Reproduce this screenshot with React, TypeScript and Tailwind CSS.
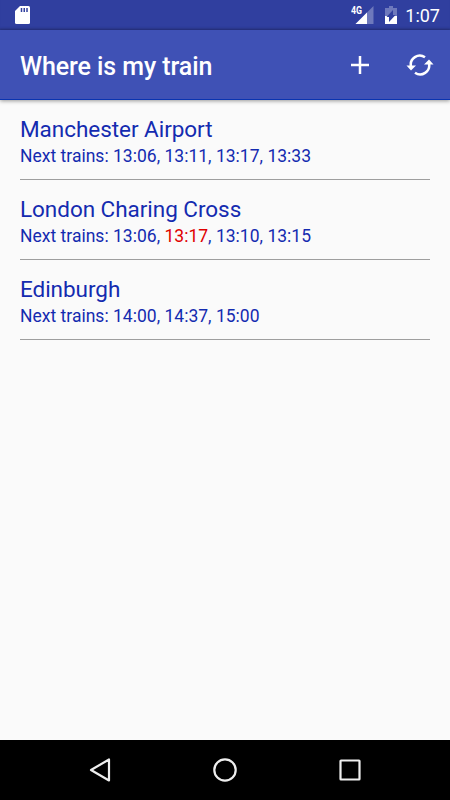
type Train = { time: string; late?: boolean };

const stations: { name: string; trains: Train[] }[] = [
  {
    name: "Manchester Airport",
    trains: [{ time: "13:06" }, { time: "13:11" }, { time: "13:17" }, { time: "13:33" }],
  },
  {
    name: "London Charing Cross",
    trains: [{ time: "13:06" }, { time: "13:17", late: true }, { time: "13:10" }, { time: "13:15" }],
  },
  {
    name: "Edinburgh",
    trains: [{ time: "14:00" }, { time: "14:37" }, { time: "15:00" }],
  },
];

function StatusBar() {
  return (
    <div className="flex h-[30px] items-center bg-[#303f9f] text-white shadow-[inset_0_-3px_3px_-2px_rgba(0,0,0,0.2)]">
      {/* SD card */}
      <svg className="ml-[14px]" width="17" height="20" viewBox="0 0 17 20">
        <path d="M6 1h8.500q1.500 0 1.500 1.500v15q0 1.500-1.500 1.500h-12q-1.500 0-1.500-1.500V6z" fill="#fff" />
        <path d="M7.500 3v4M10.250 3v4M13 3v4" stroke="#303f9f" strokeWidth="1.500" />
      </svg>

      {/* Signal */}
      <div className="relative ml-auto mr-[11px] h-5 w-[23px]">
        <svg className="absolute right-0 top-0" width="19" height="20" viewBox="0 0 19 20">
          <path d="M18.500 1v18h-18z" fill="#fff" fillOpacity=".3" />
          <path d="M12 7.500v11.500H.500z" fill="#fff" />
        </svg>
        <span className="absolute left-0 top-px origin-left scale-x-80 text-[11px] font-bold leading-[10px]">4G</span>
      </div>

      {/* Battery */}
      <svg className="mr-2" width="12" height="18" viewBox="0 0 12 18">
        <path d="M4 0h4v2h4v16H0V2h4z" fill="#fff" fillOpacity=".3" />
        <path d="M0 10h12v8H0z" fill="#fff" />
        <path d="M8 4v5h2.500L4 16v-5H1.500z" fill="#303f9f" />
      </svg>
      <span className="mr-[10px] pt-0.5 text-[18px] leading-[30px]">1:07</span>
    </div>
  );
}

function AppBar() {
  return (
    <header className="relative flex h-[70px] items-center border-b border-[#0a34b0] bg-[#3f51b5] pl-5 pr-4 text-white shadow-[0_1px_4px_rgba(0,0,0,0.4)]">
      <h1 className="flex-1 pt-[5px] text-[25px] font-medium leading-[30px] tracking-[-0.08px]">Where is my train</h1>
      <button className="mr-9 pt-px" aria-label="Add">
        <svg width="20" height="20" viewBox="0 0 20 20" fill="none" stroke="#fff" strokeWidth="2.500">
          <path d="M10 1v18M1 10h18" />
        </svg>
      </button>
      <button className="pt-px" aria-label="Refresh">
        <svg width="28" height="22" viewBox="0 0 28 22" fill="none" stroke="#fff" strokeWidth="2.500">
          <path d="M5 12.500A9 9 0 0 1 19 3.300" />
          <path d="M23 9.500A9 9 0 0 1 9 18.700" />
          <path d="M.500 11.500h9.500L5 16.500zM18 10.500h9.500L23 5.500z" fill="#fff" stroke="none" />
        </svg>
      </button>
    </header>
  );
}

function StationRow({ name, trains }: { name: string; trains: Train[] }) {
  return (
    <li className="h-20 border-b border-[#9e9e9e] pt-[15px] text-[#142bb0]">
      <h2 className="text-[22.5px] leading-[28px] tracking-[-0.04px]">{name}</h2>
      <p className="text-[17.5px] leading-[26px] tracking-[0.01px]">
        Next trains:{" "}
        {trains.map((train, i) => (
          <span key={train.time}>
            {i > 0 && ", "}
            <span className={train.late ? "text-[#e00000]" : ""}>{train.time}</span>
          </span>
        ))}
      </p>
    </li>
  );
}

function NavBar() {
  return (
    <nav className="flex h-[60px] items-center justify-between bg-black px-[87px]">
      <svg width="26" height="28" viewBox="0 0 26 28" fill="none" stroke="#eee" strokeWidth="2.200" strokeLinejoin="round">
        <path d="M22 3.500v21L4 14z" />
      </svg>
      <svg width="26" height="26" viewBox="0 0 26 26" fill="none" stroke="#eee" strokeWidth="2.200">
        <circle cx="13" cy="13" r="10.700" />
      </svg>
      <svg width="26" height="26" viewBox="0 0 26 26" fill="none" stroke="#eee" strokeWidth="2.200">
        <rect x="3.500" y="3.500" width="19" height="19" rx=".500" />
      </svg>
    </nav>
  );
}

export default function App() {
  return (
    <div className="flex h-[800px] w-[450px] flex-col overflow-hidden bg-[#fafafa] font-[Roboto,sans-serif]">
      <StatusBar />
      <AppBar />
      <main className="flex-1 px-5">
        <ul>
          {stations.map((station) => (
            <StationRow key={station.name} {...station} />
          ))}
        </ul>
      </main>
      <NavBar />
    </div>
  );
}
